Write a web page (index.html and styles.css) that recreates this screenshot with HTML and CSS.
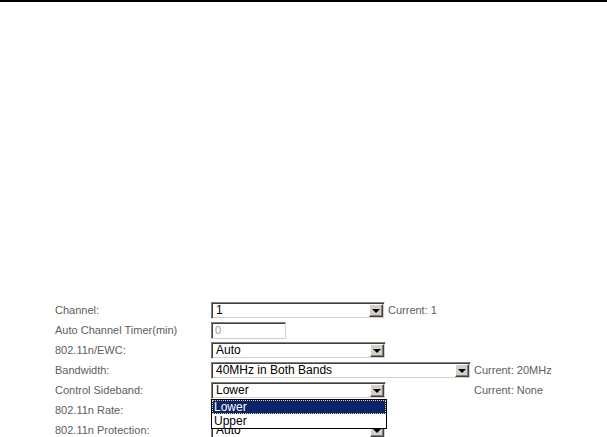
FILE: index.html
```html
<!DOCTYPE html>
<html lang="en">
<head>
  <meta charset="UTF-8">
  <title>Wireless Settings</title>
  <link rel="stylesheet" href="styles.css">
</head>
<body>

<div class="topbar"></div>

<div class="content">
  <table class="settings">
    <tr>
      <td class="label">Channel:</td>
      <td>
        <div class="field">
          <div class="select w174"><span class="val">1</span><span class="btn"><i></i></span></div>
          <span class="current">Current: 1</span>
        </div>
      </td>
    </tr>
    <tr>
      <td class="label">Auto Channel Timer(min)</td>
      <td><div class="field"><div class="textbox">0</div></div></td>
    </tr>
    <tr>
      <td class="label">802.11n/EWC:</td>
      <td><div class="field"><div class="select w175"><span class="val">Auto</span><span class="btn"><i></i></span></div></div></td>
    </tr>
    <tr>
      <td class="label">Bandwidth:</td>
      <td>
        <div class="field">
          <div class="select w260"><span class="val">40MHz in Both Bands</span><span class="btn"><i></i></span></div>
          <span class="current">Current: 20MHz</span>
        </div>
      </td>
    </tr>
    <tr>
      <td class="label">Control Sideband:</td>
      <td>
        <div class="field">
          <div class="sel-wrap">
            <div class="select w175"><span class="val">Lower</span><span class="btn"><i></i></span></div>
            <!-- open dropdown list -->
            <ul class="droplist">
              <li class="active">Lower</li>
              <li>Upper</li>
            </ul>
          </div>
          <span class="current far">Current: None</span>
        </div>
      </td>
    </tr>
    <tr>
      <td class="label">802.11n Rate:</td>
      <td><div class="field"><div class="select w175"><span class="val">Auto</span><span class="btn"><i></i></span></div></div></td>
    </tr>
    <tr>
      <td class="label">802.11n Protection:</td>
      <td><div class="field"><div class="select w175"><span class="val">Auto</span><span class="btn"><i></i></span></div></div></td>
    </tr>
  </table>
</div>

</body>
</html>
```

FILE: styles.css
```css
body {
  margin: 0;
  padding: 0;
  background-color: #fff;
  font-family: "Liberation Sans", Arial, sans-serif;
  overflow: hidden;
}

.topbar {
  height: 2px;
  background-color: #000;
}

.content {
  padding: 298px 0 0 55px;
}

.settings {
  border-collapse: collapse;
}

.settings td {
  padding: 0;
  height: 20px;
  vertical-align: middle;
}

.label {
  width: 156px;
  font-size: 11px;
  color: #5e5e5e;
  white-space: nowrap;
}

.field {
  display: flex;
  align-items: center;
}

.select {
  box-sizing: border-box;
  height: 17px;
  display: flex;
  align-items: center;
  justify-content: space-between;
  background-color: #fff;
  border: 1px solid;
  border-color: #808080 #fff #fff #808080;
  box-shadow: inset 1px 1px #404040, inset -1px -1px #d4d0c8;
  padding: 1px;
  font-size: 12px;
  color: #000;
}

.w174 { width: 174px; }
.w175 { width: 175px; }
.w260 { width: 260px; }

.val {
  padding-left: 3px;
  line-height: 13px;
}

.btn {
  box-sizing: border-box;
  width: 14px;
  height: 13px;
  background-color: #d4d0c8;
  border: 1px solid;
  border-color: #fff #404040 #404040 #fff;
  box-shadow: inset -1px -1px #808080;
  display: flex;
  align-items: center;
  justify-content: center;
}

.btn i {
  width: 0;
  height: 0;
  border-left: 4px solid transparent;
  border-right: 4px solid transparent;
  border-top: 4px solid #000;
  margin-top: 1px;
}

.textbox {
  box-sizing: border-box;
  width: 75px;
  height: 17px;
  border: 1px solid;
  border-color: #808080 #d4d0c8 #d4d0c8 #808080;
  box-shadow: inset 1px 1px #404040;
  padding: 1px 0 0 3px;
  font-size: 11px;
  line-height: 13px;
  color: #999;
}

.current {
  font-size: 11px;
  color: #5e5e5e;
  margin-left: 3px;
}

.current.far {
  margin-left: 88px;
}

.sel-wrap {
  position: relative;
}

.droplist {
  position: absolute;
  top: 17px;
  left: 0;
  z-index: 10;
  box-sizing: border-box;
  width: 176px;
  margin: 0;
  padding: 0;
  list-style: none;
  background-color: #fff;
  border: 1px solid #000;
  font-size: 12px;
}

.droplist li {
  height: 14px;
  line-height: 14px;
  padding-left: 2px;
  color: #000;
}

.droplist li.active {
  background-color: #0a246a;
  color: #fff;
  outline: 1px dotted #e8d890;
  outline-offset: -1px;
}
```
